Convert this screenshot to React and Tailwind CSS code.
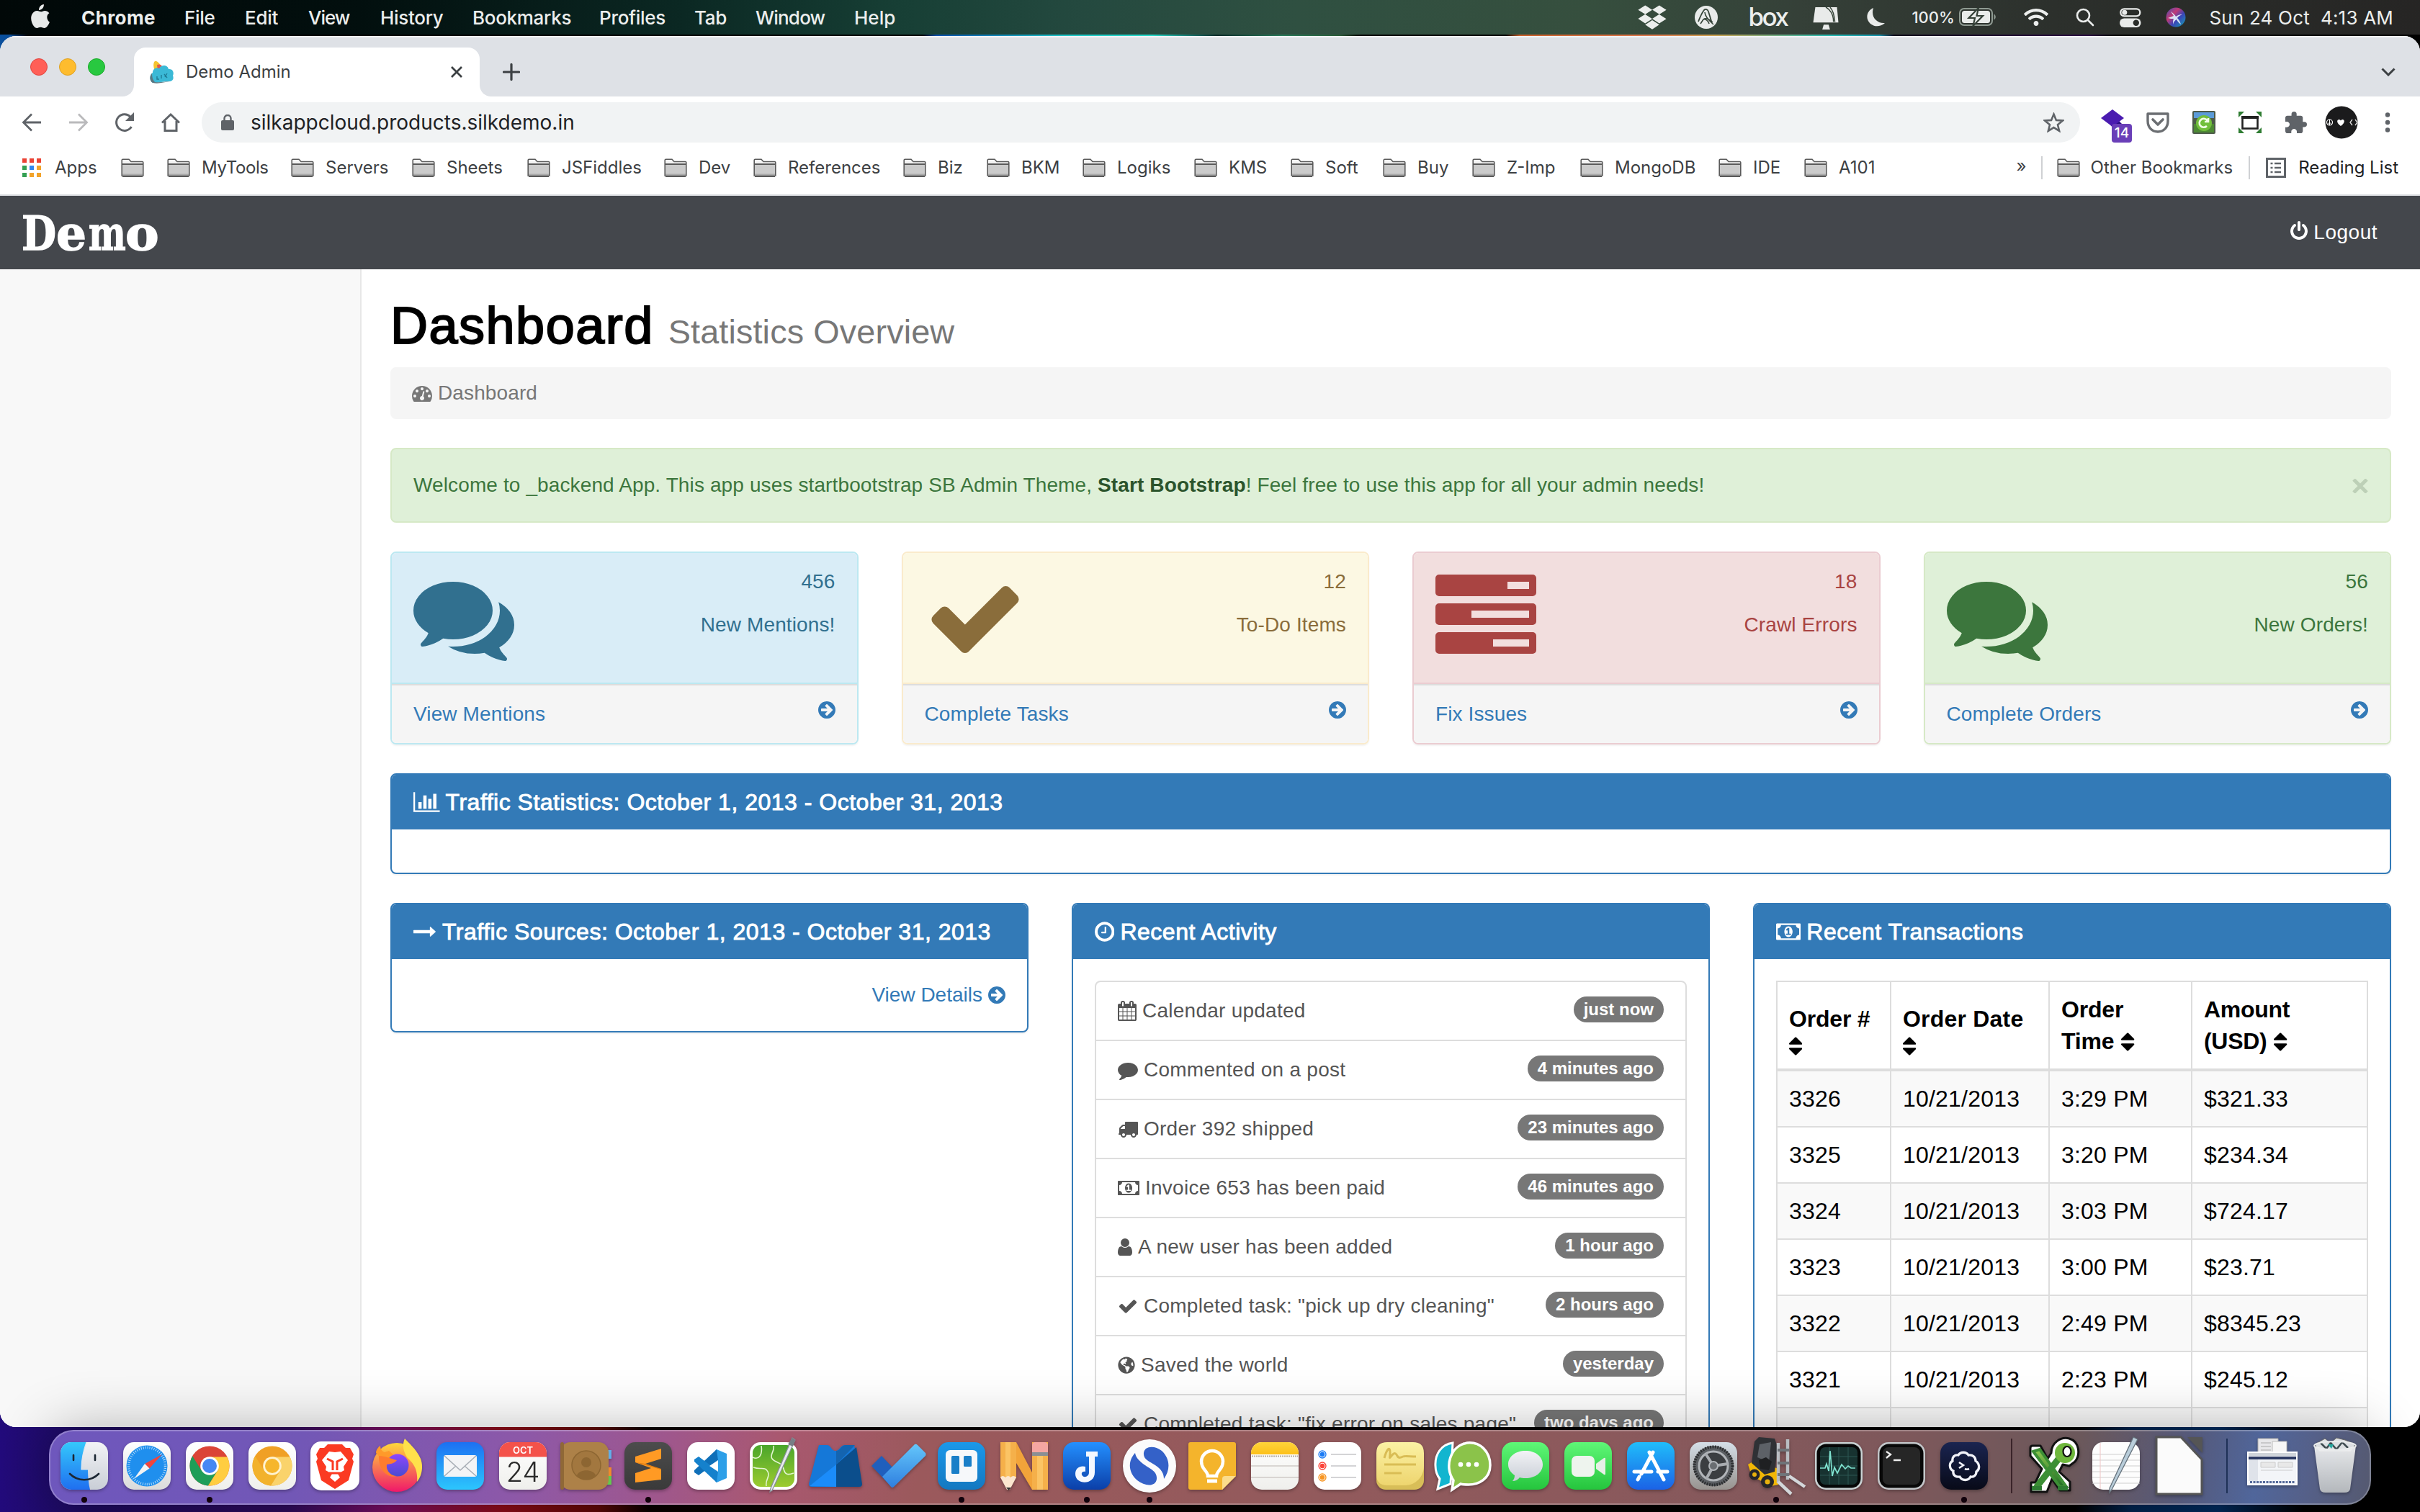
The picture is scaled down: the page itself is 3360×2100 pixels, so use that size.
import React from "react";
import { FaDropbox, FaWifi, FaGlobeAmericas } from "react-icons/fa";

/* ---------- Font Awesome 4 glyphs ---------- */

const GLYPHS = {
  comments: ["0 0 1792 1792", "M1408 768q0 139-94 257t-256.5 186.5-353.5 68.5q-86 0-176-16-124 88-278 128-36 9-86 16h-3q-11 0-20.5-8t-11.5-21q-1-3-1-6.5t.5-6.5 2-6l2.5-5 3.5-5.5 4-5 4.5-5 4-4.5q5-6 23-25t26-29.5 22.5-29 25-38.5 20.5-44q-124-72-195-177t-71-224q0-139 94-257t256.5-186.5 353.5-68.5 353.5 68.5 256.5 186.5 94 257zm384 256q0 120-71 224.5t-195 176.5q10 24 20.5 44t25 38.5 22.5 29 26 29.5 23 25q1 1 4 4.5t4.5 5 4 5 3.5 5.5l2.5 5 2 6 .5 6.5-1 6.5q-3 14-13 22t-22 7q-50-7-86-16-154-40-278-128-90 16-176 16-271 0-472-132 58 4 88 4 161 0 309-45t264-129q125-92 192-212t67-254q0-77-23-152 129 71 204 178t75 230z"],
  check: ["0 0 1792 1792", "M1671 566q0 40-28 68l-724 724-136 136q-28 28-68 28t-68-28l-136-136-362-362q-28-28-28-68t28-68l136-136q28-28 68-28t68 28l294 295 656-657q28-28 68-28t68 28l136 136q28 28 28 68z"],
  tasks: ["0 0 1792 1792", "M1024 1408h640v-128h-640v128zm-384-512h1024v-128h-1024v128zm640-512h384v-128h-384v128zm512 832v256q0 26-19 45t-45 19h-1664q-26 0-45-19t-19-45v-256q0-26 19-45t45-19h1664q26 0 45 19t19 45zm0-512v256q0 26-19 45t-45 19h-1664q-26 0-45-19t-19-45v-256q0-26 19-45t45-19h1664q26 0 45 19t19 45zm0-512v256q0 26-19 45t-45 19h-1664q-26 0-45-19t-19-45v-256q0-26 19-45t45-19h1664q26 0 45 19t19 45z"],
  arrowCircle: ["128 0 1536 1792", "M1413 896q0-27-18-45l-91-91-362-362q-18-18-45-18t-45 18l-91 91q-18 18-18 45t18 45l189 189h-502q-26 0-45 19t-19 45v128q0 26 19 45t45 19h502l-189 189q-19 19-19 45t19 45l91 91q18 18 45 18t45-18l362-362 91-91q18-18 18-45zm251 0q0 209-103 385.5t-279.5 279.5-385.5 103-385.5-103-279.5-279.5-103-385.5 103-385.5 279.5-279.5 385.5-103 385.5 103 279.5 279.5 103 385.5z"],
  dashboard: ["0 0 1792 1792", "M384 1152q0-53-37.5-90.5t-90.5-37.5-90.5 37.5-37.5 90.5 37.5 90.5 90.5 37.5 90.5-37.5 37.5-90.5zm192-448q0-53-37.5-90.5t-90.5-37.5-90.5 37.5-37.5 90.5 37.5 90.5 90.5 37.5 90.5-37.5 37.5-90.5zm428 481l101-382q6-26-7.5-48.5t-38.5-29.5-48 6.5-30 39.5l-101 382q-60 5-107 43.5t-63 98.5q-20 77 20 146t117 89 146-20 89-117q16-60-6-117t-72-91zm660-33q0-53-37.5-90.5t-90.5-37.5-90.5 37.5-37.5 90.5 37.5 90.5 90.5 37.5 90.5-37.5 37.5-90.5zm-640-640q0-53-37.5-90.5t-90.5-37.5-90.5 37.5-37.5 90.5 37.5 90.5 90.5 37.5 90.5-37.5 37.5-90.5zm448 192q0-53-37.5-90.5t-90.5-37.5-90.5 37.5-37.5 90.5 37.5 90.5 90.5 37.5 90.5-37.5 37.5-90.5zm320 448q0 261-141 483-19 29-54 29h-1402q-35 0-54-29-141-221-141-483 0-182 71-348t191-286 286-191 348-71 348 71 286 191 191 286 71 348z"],
  barChart: ["0 0 2048 1792", "M640 896v512h-256v-512h256zm384-512v1024h-256v-1024h256zm1024 1152v128h-2048v-1536h128v1408h1920zm-640-896v768h-256v-768h256zm384-384v1152h-256v-1152h256z"],
  longArrow: ["0 0 1792 1792", "M1728 893q0 14-10 24l-384 354q-16 14-35 6-19-9-19-29v-224h-1248q-14 0-23-9t-9-23v-192q0-14 9-23t23-9h1248v-224q0-21 19-29t35 5l384 350q10 10 10 23z"],
  clock: ["128 0 1536 1792", "M1024 544v448q0 14-9 23t-23 9h-320q-14 0-23-9t-9-23v-64q0-14 9-23t23-9h224v-352q0-14 9-23t23-9h64q14 0 23 9t9 23zm416 352q0-148-73-273t-198-198-273-73-273 73-198 198-73 273 73 273 198 198 273 73 273-73 198-198 73-273zm224 0q0 209-103 385.5t-279.5 279.5-385.5 103-385.5-103-279.5-279.5-103-385.5 103-385.5 279.5-279.5 385.5-103 385.5 103 279.5 279.5 103 385.5z"],
  calendar: ["64 0 1664 1792", "M192 1664h288v-288h-288v288zm352 0h320v-288h-320v288zm-352-352h288v-320h-288v320zm352 0h320v-320h-320v320zm-352-384h288v-288h-288v288zm736 736h320v-288h-320v288zm-384-736h320v-288h-320v288zm768 736h288v-288h-288v288zm-384-352h320v-320h-320v320zm-352-864v-288q0-13-9.5-22.5t-22.5-9.5h-64q-13 0-22.5 9.5t-9.5 22.5v288q0 13 9.5 22.5t22.5 9.5h64q13 0 22.5-9.5t9.5-22.5zm736 864h288v-320h-288v320zm-384-384h320v-288h-320v288zm384 0h288v-288h-288v288zm32-480v-288q0-13-9.5-22.5t-22.5-9.5h-64q-13 0-22.5 9.5t-9.5 22.5v288q0 13 9.5 22.5t22.5 9.5h64q13 0 22.5-9.5t9.5-22.5zm384-64v1280q0 52-38 90t-90 38h-1408q-52 0-90-38t-38-90v-1280q0-52 38-90t90-38h128v-96q0-66 47-113t113-47h64q66 0 113 47t47 113v96h384v-96q0-66 47-113t113-47h64q66 0 113 47t47 113v96h128q52 0 90 38t38 90z"],
  comment: ["0 0 1792 1792", "M1792 896q0 174-120 321.5t-326 233-450 85.5q-70 0-145-8-198 175-460 242-49 14-114 22-17 2-30.5-9t-17.5-29v-1q-3-4-.5-12t2-10 4.5-9.5l6-9 7-8.5 8-9q7-8 31-34.5t34.5-38 31-39.5 32.5-51 27-59 26-76q-157-89-247.5-220t-90.5-281q0-130 71-248.5t191-204.5 286-136.5 348-50.5q244 0 450 85.5t326 233 120 321.5z"],
  truck: ["0 0 1792 1792", "M640 1408q0-52-38-90t-90-38-90 38-38 90 38 90 90 38 90-38 38-90zm-384-512h384v-256h-158q-13 0-22 9l-195 195q-9 9-9 22v30zm1280 512q0-52-38-90t-90-38-90 38-38 90 38 90 90 38 90-38 38-90zm256-1088v1024q0 15-4 26.5t-13.5 18.5-16.5 11.5-23.5 6-22.5 2-25.5 0-22.5-.5q0 106-75 181t-181 75-181-75-75-181h-384q0 106-75 181t-181 75-181-75-75-181h-64q-3 0-22.5.5t-25.5 0-22.5-2-23.5-6-16.5-11.5-13.5-18.5-4-26.5q0-26 19-45t45-19v-320q0-8-.5-35t0-38 2.5-34.5 6.5-37 14-30.5 22.5-30l198-198q19-19 50.5-32t58.5-13h160v-192q0-26 19-45t45-19h1024q26 0 45 19t19 45z"],
  money: ["0 0 1920 1792", "M768 1152h384v-96h-128v-448h-114l-148 137 77 80q42-37 55-57h2v288h-128v96zm512-256q0 70-21 142t-59.5 134-101.5 101-138 39-138-39-101.5-101-59.5-134-21-142 21-142 59.5-134 101.5-101 138-39 138 39 101.5 101 59.5 134 21 142zm512 256v-512q-106 0-181-75t-75-181h-1152q0 106-75 181t-181 75v512q106 0 181 75t75 181h1152q0-106 75-181t181-75zm128-832v1152q0 26-19 45t-45 19h-1792q-26 0-45-19t-19-45v-1152q0-26 19-45t45-19h1792q26 0 45 19t19 45z"],
  user: ["256 0 1280 1792", "M1536 1399q0 109-62.5 187t-150.5 78h-854q-88 0-150.5-78t-62.5-187q0-85 8.5-160.5t31.5-152 58.5-131 94-89 134.5-34.5q131 128 313 128t313-128q76 0 134.5 34.5t94 89 58.5 131 31.5 152 8.5 160.5zm-256-887q0 159-112.5 271.5t-271.5 112.5-271.5-112.5-112.5-271.5 112.5-271.5 271.5-112.5 271.5 112.5 112.5 271.5z"],
  sort: ["384 0 1024 1792", "M1408 1088q0 26-19 45l-448 448q-19 19-45 19t-45-19l-448-448q-19-19-19-45t19-45 45-19h896q26 0 45 19t19 45zm0-384q0 26-19 45t-45 19h-896q-26 0-45-19t-19-45 19-45l448-448q19-19 45-19t45 19l448 448q19 19 19 45z"],
  power: ["128 0 1536 1792", "M1664 896q0 156-61 298t-164 245-245 164-298 61-298-61-245-164-164-245-61-298q0-182 80.5-343t226.5-270q43-32 95.5-25t83.5 50q32 42 24.5 94.5t-49.5 84.5q-98 74-151.5 181t-53.5 228q0 104 40.5 198.5t109.5 163.5 163.5 109.5 198.5 40.5 198.5-40.5 163.5-109.5 109.5-163.5 40.5-198.5q0-121-53.5-228t-151.5-181q-42-32-49.5-84.5t24.5-94.5q31-43 84-50t95 25q146 109 226.5 270t80.5 343zm-640-768v640q0 52-38 90t-90 38-90-38-38-90v-640q0-52 38-90t90-38 90 38 38 90z"],
};

function Fa({ name, className = "h-7" }) {
  const [viewBox, d] = GLYPHS[name];
  return (
    <svg viewBox={viewBox} className={`${className} w-auto shrink-0`} fill="currentColor">
      <path d={d} />
    </svg>
  );
}

/* ---------- macOS menu bar ---------- */

const MENUS = [
  ["File", "w-[84px]"],
  ["Edit", "w-[88px]"],
  ["View", "w-[100px] tracking-[-1px]"],
  ["History", "w-[128px]"],
  ["Bookmarks", "w-[176px]"],
  ["Profiles", "w-[132px]"],
  ["Tab", "w-[85px]"],
  ["Window", "w-[137px] tracking-[-0.8px]"],
  ["Help", "tracking-normal"],
];

function MenuBar() {
  return (
    <div className="flex h-12 shrink-0 items-center whitespace-pre bg-[linear-gradient(90deg,#010808_0px,#020f0e_500px,#0b2823_950px,#173f35_1250px,#24493f_1500px,#2f5041_1800px,#364f3e_2200px,#354038_2500px,#2c302c_2850px,#262524_3360px)] text-[26px] font-medium tracking-[-0.3px] text-[#eceeed]">
      <svg viewBox="0 0 28 34" className="ml-[42px] h-[33px] w-7 -translate-y-0.5" fill="#e8eaea">
        <path d="M19 0c.3 2.400-.7 4.500-2 6-1.300 1.400-3.200 2.500-5 2.300C11.700 6.200 12.800 4 14 2.700 15.300 1.200 17.400.1 19 0z" />
        <path d="M23.600 18c0-3 2-4.700 3.200-5.500C25 10 22.500 9.300 20.800 9.200c-2.300-.2-4.500 1.400-5.900 1.400S11.500 9.300 9.400 9.300C6.500 9.400 3.700 11.200 2.300 13.900-.8 19 1.400 27 4.400 31c1.400 2 3.100 3 4.700 3 2.100-.1 2.900-1.300 5.400-1.300s3.200 1.300 5.400 1.300c2.300 0 3.700-2 5.100-4 1.600-2.300 2.300-4.600 2.300-4.700-.1 0-3.700-2-3.700-7.300z" />
      </svg>
      <span className="ml-[43px] w-[143px] font-bold tracking-[0.4px]">Chrome</span>
      {MENUS.map(([label, cls]) => (
        <span key={label} className={cls}>{label}</span>
      ))}
      <div className="ml-auto flex items-center">
        <span className="w-[79px]"><FaDropbox className="h-[38px] w-[40px]" /></span>
        <span className="w-[74px]">
          <svg viewBox="0 0 32 32" className="size-8">
            <circle cx="16" cy="16" r="16" fill="#e9ebea" />
            <path d="M5 22c3-8 5-12 8-16 2-2 5-1 6 2l4 13" fill="none" stroke="#37453a" strokeWidth="1.800" />
            <path d="M14 9c0 4 4 10 12 17M8 25l4-6M12 19c3-1 7 2 8 6M12 19c3-3 9 0 13 4" fill="none" stroke="#37453a" strokeWidth="1.600" />
          </svg>
        </span>
        <span className="w-[90px] -translate-y-px text-[35px] leading-none tracking-[-2.500px]">box</span>
        <span className="w-[75px]">
          <svg viewBox="0 0 36 34" className="h-[33px] w-9 translate-y-px" fill="#e9ebea">
            <path d="M3 1h31l2 22H0z" /><path d="M18 1c5 3 11 8 11 21M24 1c3 3 6 10 7 21" fill="none" stroke="#37453a" strokeWidth="1.500" />
            <path d="M13 33l2-7h7l2 7z" />
          </svg>
        </span>
        <span className="w-[62px]">
          <svg viewBox="0 0 26 26" className="size-[26px]" fill="#e9ebea"><path d="M9 0C2 3-1 10 1 16c3 9 15 13 24 5C14 22 5 13 9 0z" /></svg>
        </span>
        <span className="w-[66px] text-[22px] tracking-normal">100%</span>
        <span className="w-[90px]">
          <svg viewBox="0 0 52 26" className="h-[26px] w-[52px]">
            <rect x="1" y="1" width="45" height="23" rx="6" fill="none" stroke="#8f9a92" strokeWidth="2" />
            <rect x="4" y="4" width="39" height="17" rx="3.500" fill="#e9ebea" />
            <path d="M48.500 8.500c3 1.500 3 6.500 0 8z" fill="#8f9a92" />
            <path d="M27 0L13.500 14H22l-2.500 11L33 11h-8.500z" fill="#e9ebea" stroke="#344037" strokeWidth="2.200" />
          </svg>
        </span>
        <span className="w-[72px]"><FaWifi className="h-[28px] w-[34px]" /></span>
        <span className="w-[61px]">
          <svg viewBox="0 0 26 26" className="size-[26px]" fill="none" stroke="#e9ebea" strokeWidth="2.600" strokeLinecap="round"><circle cx="10.500" cy="10.500" r="8.500" /><path d="M17 17l7 7" /></svg>
        </span>
        <span className="w-16">
          <svg viewBox="0 0 30 27" className="h-[27px] w-[30px]">
            <rect x="1.300" y="1.300" width="27" height="10" rx="5" fill="none" stroke="#e9ebea" strokeWidth="2.300" />
            <circle cx="6.800" cy="6.300" r="3.500" fill="#e9ebea" />
            <rect x="0" y="14.500" width="29.500" height="12.500" rx="6.200" fill="#e9ebea" />
            <circle cx="22.800" cy="20.700" r="4.200" fill="#2a2d2a" />
          </svg>
        </span>
        <span className="w-[60px]">
          <svg viewBox="0 0 28 28" className="size-7">
            <defs>
              <linearGradient id="siri" x1="0" y1="0" x2="1" y2="1"><stop offset="0" stopColor="#3a4fb6" /><stop offset=".35" stopColor="#c23a76" /><stop offset=".6" stopColor="#3a45b8" /><stop offset="1" stopColor="#10a6b0" /></linearGradient>
            </defs>
            <circle cx="14" cy="14" r="13.500" fill="url(#siri)" />
            <path d="M7 6c4 3 6 5 7 7 3-2 5-3 9-3-4 2-6 3-7 5 2 2 4 5 5 9-3-2-5-5-6-7-2 1-4 3-5 7 0-4 0-6 1-8-3 0-5 0-8-1 3-1 6-2 8-3-1-2-3-4-4-6z" fill="#e6f4ff" opacity=".9" />
          </svg>
        </span>
        <span className="mr-[37px] font-normal tracking-[0.2px]">{"Sun 24 Oct  4:13 AM"}</span>
      </div>
    </div>
  );
}

/* ---------- Chrome window ---------- */

function TabStrip() {
  return (
    <div className="flex h-[84px] shrink-0 items-end border-t-2 border-[#f1f2f4] bg-[#dee1e6]">
      <div className="mb-[29px] ml-[42px] flex gap-4">
        <span className="size-6 rounded-full border border-[#e0443e] bg-[#ff5f57]" />
        <span className="size-6 rounded-full border border-[#dea123] bg-[#febc2e]" />
        <span className="size-6 rounded-full border border-[#1aab29] bg-[#28c840]" />
      </div>
      <div className="relative ml-10 flex h-[68px] w-[480px] items-center rounded-t-2xl bg-white">
        <svg viewBox="0 0 16 16" className="absolute -left-4 bottom-0 size-4" fill="#fff"><path d="M16 0v16H0C9 16 16 9 16 0z" /></svg>
        <svg viewBox="0 0 16 16" className="absolute -right-4 bottom-0 size-4" fill="#fff"><path d="M0 0v16h16C7 16 0 9 0 0z" /></svg>
        <svg viewBox="0 0 34 32" className="ml-[22px] h-8 w-[34px]">
          <path d="M6 12C4 4 6 0 9 1s7 6 8 10z" fill="#f4c430" />
          <path d="M10 6c5-2 8 2 9 6l-8 2z" fill="#e2574c" />
          <path d="M4 31c-5-3-5-11 0-14 0-5 5-8 9-6 3-6 12-5 13 1 6-1 8 5 6 9 2 5-1 8-5 8-8 0-15 2-23 2z" fill="#3bb9d6" />
          <path d="M4 31c-5-3-4-10-1-13 0 5 1 9 4 12 7 1 15-1 21-1-8 1-16 4-24 2z" fill="#5b7680" />
          <path d="M10 22v4h3M16 20v5M20 19l4 5M24 18l-3 5" stroke="#1f7c96" strokeWidth="1.400" fill="none" />
        </svg>
        <span className="ml-4 text-[24px] text-[#3c4043]">Demo Admin</span>
        <svg viewBox="0 0 16 16" className="ml-auto mr-6 size-4" stroke="#3c4043" strokeWidth="2.800"><path d="M1 1l14 14M15 1L1 15" /></svg>
      </div>
      <svg viewBox="0 0 24 24" className="mb-[22px] ml-8 size-6" stroke="#3c4043" strokeWidth="3.200" strokeLinecap="round"><path d="M12 1.500v21M1.500 12h21" /></svg>
      <svg viewBox="0 0 20 12" className="mb-7 ml-auto mr-[34px] h-3 w-5" fill="none" stroke="#3c4043" strokeWidth="3"><path d="M1.500 1.500L10 10l8.500-8.500" /></svg>
    </div>
  );
}

function Toolbar() {
  return (
    <div className="flex h-[72px] shrink-0 items-center bg-white">
      <svg viewBox="0 0 28 26" className="ml-[30px] h-[26px] w-7" fill="none" stroke="#5f6368" strokeWidth="2.800"><path d="M27 13H3M14 1.500L2.500 13 14 24.500" /></svg>
      <svg viewBox="0 0 28 26" className="ml-[37px] h-[26px] w-7" fill="none" stroke="#bababc" strokeWidth="2.800"><path d="M1 13h24M14 1.500L25.500 13 14 24.500" /></svg>
      <svg viewBox="0 0 28 28" className="ml-[36px] size-7"><path d="M23.500 20A11.300 11.300 0 1 1 22 6.200" fill="none" stroke="#5f6368" strokeWidth="3" /><path d="M27 0v12H15z" fill="#5f6368" /></svg>
      <svg viewBox="0 0 28 28" className="ml-9 size-7" fill="none" stroke="#5f6368" strokeWidth="3"><path d="M2 14.500L14 3l12 11.500M6 12v13.500h16V12" /></svg>
      <div className="ml-[29px] flex h-14 w-[2608px] items-center rounded-full bg-[#f1f3f4]">
        <svg viewBox="0 0 18 22" className="ml-[27px] h-[22px] w-[18px]"><rect x="0" y="8" width="18" height="14" rx="2" fill="#5f6368" /><path d="M4.500 9V5.500a4.500 4.500 0 0 1 9 0V9" fill="none" stroke="#5f6368" strokeWidth="2.400" /></svg>
        <span className="ml-[23px] text-[28px] text-[#202124]">silkappcloud.products.silkdemo.in</span>
        <svg viewBox="0 0 28 27" className="ml-auto mr-[22px] h-[28px] w-[29px]" fill="none" stroke="#5f6368" strokeWidth="2.500"><path d="M14 2.500l3.300 8 8.600.6-6.600 5.500 2.100 8.400L14 20.400 6.600 25l2.100-8.400L2.100 11.100l8.600-.6z" /></svg>
      </div>
      <div className="relative ml-7 h-10 w-11">
        <svg viewBox="0 0 34 36" className="h-9 w-[34px]"><path d="M8 16l10-6 14 14-10 9z" fill="#2a0d80" /><path d="M17 2l16 12-16 12L1 14z" fill="#4a1bb0" /></svg>
        <span className="absolute -bottom-2 left-4 flex h-[26px] w-7 items-center justify-center rounded bg-[#6a3fb8] text-[19px] font-medium text-white">14</span>
      </div>
      <svg viewBox="0 0 32 30" className="ml-5 h-[30px] w-8" fill="none" stroke="#6b6e72" strokeLinejoin="round"><path d="M2 3h28v10c0 9-6 15-14 15S2 22 2 13z" strokeWidth="3.400" /><path d="M9 11l7 7 7-7" strokeWidth="3.600" strokeLinecap="round" /></svg>
      <svg viewBox="0 0 32 32" className="ml-8 size-8">
        <rect width="32" height="32" rx="2" fill="#4d5a4a" /><rect x="2" y="2" width="28" height="8" fill="#5b9bd8" /><rect x="2" y="18" width="28" height="12" fill="#4d8a34" />
        <circle cx="16" cy="17" r="11" fill="#72bf3c" /><path d="M20 21a6 6 0 1 1 1-7M22 10v5h-5" fill="none" stroke="#f2ffe8" strokeWidth="2.600" />
      </svg>
      <svg viewBox="0 0 32 30" className="ml-8 h-[30px] w-8">
        <path d="M0 0h8L0 8zM32 0v8l-8-8zM0 30v-8l8 8zM32 30h-8l8-8z" fill="#2f7d32" />
        <rect x="5.500" y="7.500" width="21" height="16" fill="none" stroke="#222" strokeWidth="2.600" /><rect x="4" y="6" width="24" height="4" fill="#222" />
      </svg>
      <svg viewBox="2 1 21 21" className="ml-[33px] size-[30px]" fill="#5f6368"><path d="M20.500 11H19V7c0-1.100-.9-2-2-2h-4V3.500a2.500 2.500 0 0 0-5 0V5H4c-1.100 0-2 .9-2 2v3.800h1.500c1.490 0 2.700 1.210 2.700 2.700s-1.210 2.700-2.700 2.700H2V20c0 1.100.9 2 2 2h3.800v-1.500c0-1.490 1.210-2.700 2.700-2.700s2.700 1.210 2.700 2.700V22H17c1.100 0 2-.9 2-2v-4h1.500a2.500 2.500 0 0 0 0-5z" /></svg>
      <svg viewBox="0 0 46 46" className="ml-[25px] size-[46px]">
        <circle cx="23" cy="23" r="22.500" fill="#1b1b1c" />
        <circle cx="6.500" cy="23" r="4" fill="none" stroke="#fff" strokeWidth="1.200" /><path d="M6.500 19v8M6.500 23l-3 3M6.500 23l3 3" stroke="#fff" />
        <path d="M22 28c-7-5-5-9-2.500-9 1.500 0 2.500 1.500 2.500 1.500S23 19 24.500 19c2.500 0 4.500 4-2.500 9z" fill="#fff" />
        <path d="M38 19l-3 4 3 4M42 19l3 4-3 4" fill="none" stroke="#ddd" strokeWidth="1.400" />
      </svg>
      <svg viewBox="0 0 8 28" className="ml-[37px] h-7 w-2" fill="#5f6368"><circle cx="4" cy="3.500" r="3.200" /><circle cx="4" cy="14" r="3.200" /><circle cx="4" cy="24.500" r="3.200" /></svg>
    </div>
  );
}

function Folder() {
  return (
    <svg viewBox="0 0 32 26" className="h-[26px] w-8 shrink-0">
      <path d="M1.200 24V2.500q0-1.300 1.300-1.300H11l3 3.300h15.500q1.300 0 1.300 1.300V24z" fill="#f4f4f4" stroke="#5a5a5a" strokeWidth="1.600" />
      <rect x="2" y="9" width="28" height="14" fill="#cbcbcb" />
      <path d="M1 8h30M2 25h28" stroke="#5a5a5a" strokeWidth="2" />
      <path d="M2 22.500h28" stroke="#a9a9a9" strokeWidth="2" />
    </svg>
  );
}

const BOOKMARKS = [
  ["", "w-16"],
  ["MyTools", "w-[172px] tracking-[-0.4px]"],
  ["Servers", "w-[168px]"],
  ["Sheets", "w-40"],
  ["JSFiddles", "w-[190px]"],
  ["Dev", "w-[124px]"],
  ["References", "w-[208px]"],
  ["Biz", "w-[116px]"],
  ["BKM", "w-[133px]"],
  ["Logiks", "w-[155px]"],
  ["KMS", "w-[134px]"],
  ["Soft", "w-32"],
  ["Buy", "w-[124px]"],
  ["Z-Imp", "w-[150px]"],
  ["MongoDB", "w-48"],
  ["IDE", "w-[119px]"],
  ["A101", "w-[120px]"],
];

function BookmarksBar() {
  return (
    <div className="flex h-[66px] shrink-0 items-center border-b-2 border-[#dadce0] bg-white pb-2.5 text-[24px] text-[#3c4043]">
      <svg viewBox="0 0 26 26" className="ml-[31px] size-[26px]">
        <path d="M0 0h6v6H0zM10 0h6v6h-6zM20 0h6v6h-6z" fill="#ea4335" />
        <path d="M0 10h6v6H0zM0 20h6v6H0z" fill="#34a053" /><path d="M10 10h6v6h-6z" fill="#2f86f0" />
        <path d="M20 10h6v6h-6zM10 20h6v6h-6zM20 20h6v6h-6z" fill="#f2a32a" />
      </svg>
      <span className="ml-[19px] w-[92px]">Apps</span>
      {BOOKMARKS.map(([label, cls], i) => (
        <span key={i} className={`flex items-center gap-4 ${cls}`}><Folder />{label}</span>
      ))}
      <span className="ml-auto -translate-y-0.5 text-[24px]">»</span>
      <span className="ml-5 h-8 w-0.5 bg-[#cfd1d4]" />
      <span className="ml-5 flex items-center gap-[15px]"><Folder />Other Bookmarks</span>
      <span className="ml-[22px] h-8 w-0.5 bg-[#cfd1d4]" />
      <svg viewBox="0 0 28 28" className="ml-[22px] size-7" stroke="#5f6368"><rect x="1.500" y="1.500" width="25" height="25" fill="none" strokeWidth="3" /><path d="M6.500 8h3M12 8h9M6.500 14h3M12 14h9M6.500 20h3M12 20h9" strokeWidth="2.600" /></svg>
      <span className="ml-[17px] mr-[30px] text-[#202124]">Reading List</span>
    </div>
  );
}

/* ---------- Admin page ---------- */

const STATS = [
  { icon: "comments", n: "456", label: "New Mentions!", link: "View Mentions", box: "border-[#bce8f1]", head: "bg-[#d9edf7] text-[#31708f] border-[#bce8f1]" },
  { icon: "check", n: "12", label: "To-Do Items", link: "Complete Tasks", box: "border-[#faebcc]", head: "bg-[#fcf8e3] text-[#8a6d3b] border-[#faebcc]" },
  { icon: "tasks", n: "18", label: "Crawl Errors", link: "Fix Issues", box: "border-[#ebccd1]", head: "bg-[#f2dede] text-[#a94442] border-[#ebccd1]" },
  { icon: "comments", n: "56", label: "New Orders!", link: "Complete Orders", box: "border-[#d6e9c6]", head: "bg-[#dff0d8] text-[#3c763d] border-[#d6e9c6]" },
];

function StatPanel({ s }) {
  return (
    <div className={`overflow-hidden rounded-lg border-2 shadow-[0_2px_2px_rgba(0,0,0,0.05)] ${s.box}`}>
      <div className={`flex h-[182px] justify-between border-b-2 px-[30px] py-5 ${s.head}`}>
        <Fa name={s.icon} className="h-[140px]" />
        <div className="flex flex-col gap-5 text-right">
          <div>{s.n}</div>
          <div>{s.label}</div>
        </div>
      </div>
      <div className="flex h-[82px] items-start justify-between border-t-2 border-[#ddd] bg-[#f5f5f5] px-[30px] pt-5 text-[#337ab7]">
        <span>{s.link}</span>
        <Fa name="arrowCircle" />
      </div>
    </div>
  );
}

function Panel({ icon, title, children, className = "" }) {
  return (
    <div className={`overflow-hidden rounded-lg border-2 border-[#337ab7] bg-white shadow-[0_2px_2px_rgba(0,0,0,0.05)] ${className}`}>
      <div className="flex h-[76px] items-center gap-2 bg-[#337ab7] px-[30px] text-[32px] tracking-[0.5px] text-white [-webkit-text-stroke:0.9px_white]">
        <Fa name={icon} className="h-8" />
        {title}
      </div>
      {children}
    </div>
  );
}

const ACTIVITY = [
  ["calendar", "Calendar updated", "just now"],
  ["comment", "Commented on a post", "4 minutes ago"],
  ["truck", "Order 392 shipped", "23 minutes ago"],
  ["money", "Invoice 653 has been paid", "46 minutes ago"],
  ["user", "A new user has been added", "1 hour ago"],
  ["check", 'Completed task: "pick up dry cleaning"', "2 hours ago"],
  ["globe", "Saved the world", "yesterday"],
  ["check", 'Completed task: "fix error on sales page"', "two days ago"],
];

const ORDERS = [
  ["3326", "10/21/2013", "3:29 PM", "$321.33"],
  ["3325", "10/21/2013", "3:20 PM", "$234.34"],
  ["3324", "10/21/2013", "3:03 PM", "$724.17"],
  ["3323", "10/21/2013", "3:00 PM", "$23.71"],
  ["3322", "10/21/2013", "2:49 PM", "$8345.23"],
  ["3321", "10/21/2013", "2:23 PM", "$245.12"],
  ["3320", "10/21/2013", "2:15 PM", "$5663.54"],
];

const COLS = "grid grid-cols-[158px_220px_198px_1fr]";

function Transactions() {
  return (
    <div className="mx-[30px] mt-[30px] border-2 border-[#ddd] text-[32px] leading-[44px] text-black">
      <div className={`${COLS} h-[124px] divide-x-2 divide-[#ddd] border-b-4 border-[#ddd] font-bold`}>
        <div className="px-4 pt-[29px] tracking-[-0.2px]">Order #<Fa name="sort" className="h-8" /></div>
        <div className="px-4 pt-[29px] tracking-[0.2px]">Order Date<Fa name="sort" className="h-8" /></div>
        <div className="px-4 pt-4 tracking-[-0.2px]">Order<div className="flex items-center gap-2.5">Time<Fa name="sort" className="h-8 translate-y-px" /></div></div>
        <div className="px-4 pt-4 tracking-[-0.3px]">Amount<div className="flex items-center gap-2.5">(USD)<Fa name="sort" className="h-8 translate-y-px" /></div></div>
      </div>
      {ORDERS.map((row, i) => (
        <div key={i} className={`${COLS} h-[78px] divide-x-2 divide-[#ddd] border-b-2 border-[#ddd] ${i % 2 ? "bg-white" : "bg-[#f9f9f9]"}`}>
          {row.map((cell, j) => (
            <div key={j} className="px-4 pt-4 tracking-[0.2px]">{cell}</div>
          ))}
        </div>
      ))}
    </div>
  );
}

function AdminPage() {
  return (
    <div className="flex grow flex-col bg-white font-['Liberation_Sans',sans-serif] text-[28px] leading-[40px] tracking-[0.12px]">
      <header className="flex h-[102px] shrink-0 items-center justify-between bg-[#44474c] text-white">
        <div className="ml-[30px] flex translate-y-px font-['DejaVu_Serif',serif] text-[66px] font-bold leading-none tracking-normal [-webkit-text-stroke:1.5px_white]">
          <span className="w-12 origin-left scale-x-[0.84]">D</span>
          <span className="w-[45px]">e</span>
          <span className="w-[51px] origin-left scale-x-[0.74]">m</span>
          <span className="origin-left scale-x-[1.06]">o</span>
        </div>
        <div className="mr-[59px] flex items-center gap-2 tracking-[0.5px]"><Fa name="power" className="h-7 -translate-y-0.5" />Logout</div>
      </header>
      <div className="flex grow">
        <aside className="w-[502px] shrink-0 border-r-2 border-[#e7e7e7] bg-[#f8f8f8]" />
        <main className="flex grow flex-col px-10">
          <h1 className="flex h-[136px] items-baseline gap-5 pt-[38px] text-[72px] leading-[80px] text-black">
            <span className="tracking-[1.500px] [-webkit-text-stroke:2px_black]">Dashboard</span>
            <span className="text-[46.800px] text-[#777]">Statistics Overview</span>
          </h1>
          <div className="flex h-[72px] items-center gap-2 rounded-lg bg-[#f5f5f5] px-[30px] text-[#777]"><Fa name="dashboard" className="h-7" />Dashboard</div>
          <div className="mt-10 flex h-[104px] items-center justify-between rounded-lg border-2 border-[#d6e9c6] bg-[#dff0d8] px-[30px] text-[#3c763d]">
            <p>Welcome to _backend App. This app uses startbootstrap SB Admin Theme, <b className="text-[#2b542c]">Start Bootstrap</b>! Feel free to use this app for all your admin needs!</p>
            <svg viewBox="0 0 22 20" className="mt-px h-5 w-[22px]" stroke="#bdd0b7" strokeWidth="5"><path d="M2 1l18 18M20 1L2 19" /></svg>
          </div>
          <div className="mt-10 grid grid-cols-4 gap-[60px]">
            {STATS.map((s) => <StatPanel key={s.label} s={s} />)}
          </div>
          <Panel icon="barChart" title="Traffic Statistics: October 1, 2013 - October 31, 2013" className="mt-10 h-[140px]" />
          <div className="mt-10 grid grid-cols-3 items-start gap-[60px]">
            <Panel icon="longArrow" title="Traffic Sources: October 1, 2013 - October 31, 2013" className="h-[180px]">
              <div className="flex items-center justify-end gap-2 px-[30px] pt-[30px] tracking-normal text-[#337ab7]">View Details <Fa name="arrowCircle" /></div>
            </Panel>
            <Panel icon="clock" title="Recent Activity" className="h-[800px]">
              <div className="mx-[30px] mt-[30px] divide-y-2 divide-[#ddd] overflow-hidden rounded-lg border-2 border-[#ddd] text-[#555]">
                {ACTIVITY.map(([icon, text, when]) => (
                  <div key={text} className="flex h-[82px] items-start justify-between px-[30px] pt-5">
                    <span className="flex items-center gap-2 tracking-[0.25px]">
                      {icon === "globe" ? <FaGlobeAmericas className="size-6" /> : <Fa name={icon} />}{text}
                    </span>
                    <span className="flex h-9 items-center rounded-[20px] bg-[#777] px-3.5 text-[24px] font-bold leading-none tracking-normal text-white">{when}</span>
                  </div>
                ))}
              </div>
            </Panel>
            <Panel icon="money" title="Recent Transactions" className="h-[800px]">
              <Transactions />
            </Panel>
          </div>
        </main>
      </div>
    </div>
  );
}

/* ---------- Dock ---------- */

const Tile = ({ fill = "#fff", children }) => (
  <>
    <rect x="7" y="7" width="66" height="66" rx="15" fill={fill} />
    {children}
  </>
);

const Gradients = () => (
  <svg className="absolute size-0">
    <defs>
      {[
        ["blueV", "#1d70f2", "#2cc6fd"], ["finderL", "#35c8fb", "#1f6ff0"], ["grayV", "#f2f3f6", "#c9ced6"], ["whiteV", "#ffffff", "#dadada"],
        ["greenV", "#5ff777", "#25c53d"], ["storeV", "#20bdfa", "#1b62e6"], ["jopV", "#2490ff", "#0b3fa8"], ["trelloV", "#1b98ea", "#1478c0"],
        ["darkV", "#4c4c4c", "#3a3a3a"], ["prefV", "#d5dfe8", "#97938f"], ["calV", "#ffffff", "#efefec"], ["mapV", "#49a52b", "#9ccb2f"],
        ["stickV", "#fbf2a4", "#eed56f"], ["fireV", "#ffd83a", "#f0186a"], ["termV", "#1a2450", "#080a18"], ["notesV", "#ffd43a", "#fcc01a"],
        ["todoV", "#64c6fa", "#2f7fe0"], ["xV", "#8fcb4f", "#1f6b25"], ["trashV", "#f2f3f4", "#bcbfc2"], ["purp", "#8f46ff", "#4a4bd0"],
      ].map(([id, a, b]) => (
        <linearGradient key={id} id={id} x1="0" y1="0" x2="0" y2="1"><stop offset="0" stopColor={a} /><stop offset="1" stopColor={b} /></linearGradient>
      ))}
      <clipPath id="tile"><rect x="7" y="7" width="66" height="66" rx="15" /></clipPath>
    </defs>
  </svg>
);

const ChromeMark = ({ c }) => (
  <>
    <circle cx="40" cy="40" r="27.500" fill={c[0]} />
    <path d="M16.200 26.200A27.500 27.500 0 0 0 38 67.400L51.500 46 28.500 46z" fill={c[1]} />
    <path d="M40 27.500h24.500A27.500 27.500 0 0 1 38 67.400L52 45z" fill={c[2]} />
    <circle cx="40" cy="40" r="12.800" fill={c[4]} />
    <circle cx="40" cy="40" r="10" fill={c[3]} />
  </>
);

const APPS = [
  { name: "Finder", run: true, art: (
    <g><g clipPath="url(#tile)"><rect x="7" y="7" width="66" height="66" fill="url(#grayV)" /><path d="M7 7h36c-4 11-7 24-7 38h9c0 10 1 20 3 28H7z" fill="url(#finderL)" /></g>
      <path d="M25 25v7M55 25v7M20 51c11 11 29 11 40 0" fill="none" stroke="#1c2733" strokeWidth="2.600" strokeLinecap="round" /><path d="M43 7c-4 11-7 24-7 38h9" fill="none" stroke="#dfe6ee" strokeWidth="1.200" /></g>) },
  { name: "Safari", art: (
    <Tile fill="url(#whiteV)"><circle cx="40" cy="40" r="28.500" fill="#1f8fee" /><circle cx="40" cy="40" r="25.500" fill="none" stroke="#b5dcf9" strokeWidth="3.500" strokeDasharray="1 2" />
      <path d="M61 24L43.500 43.500 37 37z" fill="#f0443c" /><path d="M22 58l15-21 6.500 6.500z" fill="#f3f3f3" /></Tile>) },
  { name: "Chrome", run: true, art: <Tile fill="url(#calV)"><ChromeMark c={["#db4437", "#1e9e58", "#ffcd40", "#4687f4", "#fff"]} /></Tile> },
  { name: "Canary", art: <Tile fill="url(#calV)"><ChromeMark c={["#f0a025", "#f2b22c", "#fad36b", "#f6b62c", "#fff3d0"]} /></Tile> },
  { name: "Brave", art: (
    <g><rect x="6" y="6" width="68" height="68" rx="15" fill="#fff" /><path d="M30 10h20l5 5h6l5 9-2 6 2 4-7 26-19 12-19-12-7-26 2-4-2-6 5-9h6z" fill="#fb3a22" />
      <path d="M40 21l8-1 10 12-6 9 1 5-9 5 3 5-7 6-7-6 3-5-9-5 1-5-6-9 10-12z" fill="#fff" /><path d="M29 30l8 4v12M51 30l-8 4v12M32 50h16" fill="none" stroke="#fb3a22" strokeWidth="3" /></g>) },
  { name: "Firefox", art: (
    <g><circle cx="39" cy="42" r="34" fill="url(#fireV)" /><path d="M50 2c4 5 16 14 22 28 4 10 2 24-5 32 2-20-8-28-14-34-5-8-7-17-3-26z" fill="#ffe14a" />
      <path d="M10 22c0-4 3-8 6-10 0 5 3 8 6 9l6-2c5 4 10 9 10 12-6 2-8 5-14 6z" fill="#ff9a2a" /><circle cx="40" cy="39" r="15.500" fill="url(#purp)" /><path d="M14 26c8 0 17 4 25 6-4 5-8 5-14 6-2 8 5 16 14 16-12 4-26-8-25-28z" fill="#ff7c2e" /></g>) },
  { name: "Mail", art: (
    <Tile fill="url(#blueV)"><rect x="17" y="25" width="46" height="30" rx="3" fill="#f3f4f6" /><path d="M18 26l22 20 22-20M18 54l16-14M62 54L46 40" fill="none" stroke="#a7adb5" strokeWidth="1.500" /></Tile>) },
  { name: "Calendar", art: (
    <g><Tile fill="url(#calV)" /><g clipPath="url(#tile)"><rect x="7" y="7" width="66" height="20.500" fill="#f4524a" /></g>
      <text x="40" y="22.500" textAnchor="middle" fontSize="13" fontWeight="600" fill="#fff" fontFamily="Inter">OCT</text>
      <text x="40" y="62" textAnchor="middle" fontSize="38" fontWeight="300" fill="#2a2a2a" fontFamily="Inter">24</text></g>) },
  { name: "Contacts", art: (
    <g><path d="M68 18h8v12h-8z" fill="#62aee8" /><path d="M68 42h8v12h-8z" fill="#f08a2c" /><path d="M68 54h8v12h-8z" fill="#63c94d" /><rect x="5" y="7" width="67" height="66" rx="14" fill="#ad8148" /><rect x="5" y="7" width="5" height="66" rx="3" fill="#8f6837" />
      <circle cx="41" cy="39" r="20" fill="#a2773f" stroke="#8d6632" strokeWidth="1.500" /><circle cx="41" cy="35" r="7" fill="#8d6632" /><path d="M28 53c3-9 23-9 26 0-6 8-20 8-26 0z" fill="#8d6632" /></g>) },
  { name: "Sublime", run: true, art: (
    <Tile fill="url(#darkV)"><path d="M22 27l36-11v14L36 37l22 8v14L22 63V50l22-7-22-8z" fill="#ff9a24" /><path d="M22 35l36 10v-1L36 37z" fill="#e07c10" /></Tile>) },
  { name: "VSCode", art: (
    <Tile><path d="M48 17l14 6v34l-14 6-2-2V19z" fill="#2d9fe8" /><path d="M48 17l2 16-27 20-6-4v-3z" fill="#0f6fb8" /><path d="M48 63l2-16-27-20-6 4v3z" fill="#1581cc" /><path d="M50 32v16L38 40z" fill="#fff" /></Tile>) },
  { name: "CotEditor", art: (
    <g><rect x="7" y="7" width="66" height="66" rx="15" fill="#fff" /><rect x="11" y="11" width="58" height="58" rx="11" fill="url(#mapV)" />
      <path d="M11 28c8 4 14-2 12-16M30 68c-2-10 6-12 2-20s-10-2-20-6M40 12c2 8-6 12-2 18s14 4 16 14 8 8 14 6" fill="none" stroke="#e3f6d2" strokeWidth="1.600" /><path d="M66 1l4 3-32 70-3 2 1-5z" fill="#e9ebee" stroke="#87909a" strokeWidth="1.200" /><path d="M60 10l6-9 4 3-3 9z" fill="#777e86" /></g>) },
  { name: "Kite", art: (
    <g><path d="M16 11h11c6 0 6 8 12 8s6-8 14-8h12l10 54q0 4-3 4H6q-4 0-4-4z" fill="#1578d8" /><path d="M40 69V38L68 14l8 51q0 4-4 4z" fill="#0b4e8c" /><path d="M66 11L40 38V19c6 0 6-8 14-8z" fill="#1464b0" /><path d="M3 68L40 38v31z" fill="#1b8cfa" /></g>) },
  { name: "To Do", art: (
    <g><path d="M2 40l14-14 16 17-9 19z" fill="#1f5fbd" /><path d="M62 10q2-1 4 1l11 11q1 2 0 4L33 69q-2 2-4 0L17 55z" fill="url(#todoV)" /></g>) },
  { name: "Trello", run: true, art: (
    <Tile fill="url(#trelloV)"><rect x="18" y="18" width="44" height="44" rx="6" fill="#f6f8fa" /><rect x="26" y="26" width="11" height="25" rx="1.500" fill="#1a7fc8" /><rect x="43" y="26" width="11" height="15" rx="1.500" fill="#1a7fc8" /></Tile>) },
  { name: "Pencil", art: (
    <g><path d="M29 7l22 42v24L29 36z" fill="#f2a43a" /><rect x="7" y="7" width="22" height="50" fill="#f5b04a" /><rect x="14" y="7" width="7" height="50" fill="#fbc465" /><path d="M7 56q3-4 7 0 4-4 7 0 4-4 8 0L20 73h-4z" fill="#fbe6cf" /><path d="M15 70h7l-3.500 4z" fill="#333" /><rect x="51" y="7" width="22" height="66" fill="#f5b04a" /><rect x="58" y="24" width="8" height="49" fill="#fbc465" /><path d="M51 12q0-5 5-5h12q5 0 5 5v9H51z" fill="#f4a6a2" /><rect x="51" y="21" width="22" height="5" fill="#8a8f94" /></g>) },
  { name: "Joplin", run: true, art: (
    <Tile fill="url(#jopV)"><path d="M39 20h16v7h-4v22c0 18-27 18-27 2 0-9 8-12 14-10v7c-3-1-6 1-5 4 1 5 10 4 10-3V27h-4z" fill="#f3f8ff" /></Tile>) },
  { name: "Simplenote", run: true, art: (
    <g><circle cx="40" cy="40" r="37" fill="#fbfbfc" /><path d="M20 22C9 34 11 50 23 60c11 9 26 9 27-2 1-11-10-14-19-21-7-6-10-9-11-15z" fill="#3461c8" /><path d="M60 58c9-12 9-28-3-39-10-8-24-7-25 3-1 9 8 12 16 17 9 6 12 12 12 19z" fill="#3461c8" /></g>) },
  { name: "Keep", art: (
    <g><path d="M7 10q0-3 3-3h60q3 0 3 3v44L54 73H10q-3 0-3-3z" fill="#f4b42c" /><path d="M73 54L54 73V58q0-4 4-4z" fill="#fbdc8c" /><path d="M34 54c0-7-9-9-9-20a15 15 0 0 1 30 0c0 11-9 13-9 20z" fill="none" stroke="#fff" strokeWidth="4.500" /><path d="M33 61h14" stroke="#fff" strokeWidth="5" /></g>) },
  { name: "Notes", art: (
    <g><Tile fill="url(#calV)" /><g clipPath="url(#tile)"><rect x="7" y="7" width="66" height="17" fill="url(#notesV)" /></g><path d="M8 26.500h64" stroke="#b5ada0" strokeWidth="2" strokeDasharray="2 1" /><path d="M7 40h66M7 56h66" stroke="#cfccc7" strokeWidth="1.500" /></g>) },
  { name: "Reminders", art: (
    <Tile>{[["#1a7bf5", 24], ["#fb4338", 40], ["#f79420", 56]].map(([c, y]) => <g key={y}><circle cx="19" cy={y} r="5" fill="none" stroke={c} strokeWidth="1.300" /><circle cx="19" cy={y} r="3.300" fill={c} /><path d={`M31 ${y}h35`} stroke="#c6c6c8" strokeWidth="1.500" /></g>)}</Tile>) },
  { name: "Stickies", art: (
    <g><rect x="7" y="14" width="66" height="59" rx="13" fill="#d8be58" /><path d="M22 7h36q15 0 15 15v18c0 15-12 27-26 27H22Q7 67 7 52V22Q7 7 22 7z" fill="url(#stickV)" /><path d="M18 29c4-14 8-16 8-8s-2 10 2 5 6-4 8 0 6 2 8 1 10 0 18 0M18 38h44M18 50h24" fill="none" stroke="#d9bd55" strokeWidth="3" /></g>) },
  { name: "Chat", art: (
    <g><path d="M26 8C10 10 1 24 2 40c0 8 3 14 6 18L5 72l18-7z" fill="#12b5cf" stroke="#fff" strokeWidth="3" /><path d="M46 8c18-2 32 12 32 31S62 66 48 66c-4 0-8 0-11-1l-12 8 2-13C14 42 22 12 46 8z" fill="#8bc34a" stroke="#fff" strokeWidth="3.500" /><circle cx="37" cy="38" r="3.300" fill="#fff" /><circle cx="48" cy="38" r="3.300" fill="#fff" /><circle cx="59" cy="38" r="3.300" fill="#fff" /></g>) },
  { name: "Messages", art: (
    <Tile fill="url(#greenV)"><path d="M40 19c14 0 24 8 24 19s-10 19-24 19c-3 0-6-.3-8-1-2 3-6 5-10 5 2-2 3-5 3-8-6-4-9-9-9-15 0-11 10-19 24-19z" fill="url(#grayV)" /></Tile>) },
  { name: "FaceTime", art: (
    <Tile fill="url(#greenV)"><rect x="17" y="26" width="32" height="29" rx="7" fill="#eef4ee" /><path d="M51 37l11-8q2-1 2 1v21q0 2-2 1l-11-8z" fill="#e6efe6" /></Tile>) },
  { name: "App Store", art: (
    <Tile fill="url(#storeV)"><path d="M43 21L27 51M38 21l20 38M17 48h24M50 48h13M24 55l-2 4" stroke="#fff" strokeWidth="5" strokeLinecap="round" /></Tile>) },
  { name: "System Preferences", art: (
    <Tile fill="url(#prefV)"><circle cx="40" cy="40" r="28" fill="#5b5f63" /><circle cx="40" cy="40" r="26.500" fill="none" stroke="#2c2e30" strokeWidth="4" strokeDasharray="2 1.500" /><circle cx="40" cy="40" r="20" fill="#3b3e41" stroke="#b1b5b9" strokeWidth="3" /><path d="M40 40l20-3M40 40L29 23M40 40L30 58" stroke="#a8acb0" strokeWidth="4" /><circle cx="40" cy="40" r="6" fill="#6a6e72" stroke="#b1b5b9" strokeWidth="2" /></Tile>) },
  { name: "ForkLift", run: true, art: (
    <g><path d="M1 38l10-6 32 12v22l-10 2L6 54z" fill="#f2b705" /><path d="M6 36l4-30 6-6 22 2 4 12-4 34-14 4z" fill="#2f3135" /><path d="M14 28l3-18 16-3-3 28z" fill="#5d6167" /><path d="M16 32l10-4 8 6-4 12-12-2z" fill="#1f2022" /><circle cx="10" cy="52" r="7.500" fill="#26272a" /><circle cx="10" cy="52" r="3" fill="#e8b10c" /><circle cx="28" cy="62" r="9" fill="#26272a" /><circle cx="28" cy="62" r="3.500" fill="#e8b10c" /><path d="M43 8v56M56 3v56" stroke="#b9bec3" strokeWidth="4.500" /><path d="M42 18h16M42 36h16M42 52h16" stroke="#6f7479" strokeWidth="4" /><path d="M43 62l18 17M58 54l22 15" stroke="#d3d7da" strokeWidth="4.500" /></g>) },
  { name: "Activity Monitor", art: (
    <Tile fill="#c8d1d2"><rect x="9.500" y="9.500" width="61" height="61" rx="13" fill="#050707" /><rect x="14" y="14" width="52" height="52" rx="7" fill="#173230" /><path d="M14 27h52M14 40h52M14 53h52M27 14v52M40 14v52M53 14v52" stroke="#2c5653" strokeWidth="1" /><path d="M14 43h7l2-6 3 10 2-28 3 35 3-12 4 8 6-12 5 6 4-4 4 3h6" fill="none" stroke="#7fe3d0" strokeWidth="1.700" /></Tile>) },
  { name: "Terminal", art: (
    <Tile fill="#c3c6c9"><rect x="9.500" y="9.500" width="61" height="61" rx="13" fill="#080808" /><rect x="14" y="14" width="52" height="52" rx="8" fill="#262626" /><path d="M19 20l6 4-6 5M29 32h10" fill="none" stroke="#eee" strokeWidth="2.300" /></Tile>) },
  { name: "Termius", run: true, art: (
    <Tile fill="url(#termV)"><path d="M32 25c3-5 11-5 14 0 6-1 10 3 10 8 6 4 6 12 1 15 0 5-4 8-8 7-3 6-12 6-15 0-5 1-10-2-9-8-6-3-6-11-1-14-1-5 3-9 8-8z" fill="none" stroke="#f1f2f8" strokeWidth="3.300" /><path d="M33 35l6 4-6 4M41 44q3 1.500 6 0" fill="none" stroke="#f1f2f8" strokeWidth="2.600" /></Tile>) },
];

const FILES = [
  { name: "X", art: (
    <g><path d="M8 15q0-3 3-3h11l10 18 5-8C37 8 50-1 62 2c14 4 16 22 8 32l-8 6-9-2-5 10 15 14v12H49L38 58l-7 18H9V63h6l9-19L8 26z" fill="#fff" stroke="#111" strokeWidth="3" strokeLinejoin="round" /><path d="M12 20l9-3 37 52h-9z" fill="url(#xV)" stroke="#3c8f35" strokeWidth="4" /><path d="M16 70L52 24" stroke="#3c8f35" strokeWidth="9" /><path d="M10 71h14M46 71h14" stroke="#2e7d32" strokeWidth="6" /><circle cx="56" cy="22" r="14" fill="#6fb83c" /><ellipse cx="59" cy="20" rx="5.500" ry="7" fill="#fff" stroke="#111" strokeWidth="2.200" /></g>) },
  { name: "TextEdit", art: (
    <g><rect x="7" y="7" width="66" height="66" rx="15" fill="#fdfdfd" /><path d="M7 24h66M7 32h66M7 40h66M7 48h66M7 56h66M7 64h66" stroke="#cfcfcf" strokeWidth="1.200" /><path d="M18 8v64" stroke="#efc4c4" /><path d="M64 0l6 3-36 70-3 4 0-6z" fill="#b9cdda" stroke="#66737d" strokeWidth="1.300" /></g>) },
  { name: "LibreOffice", art: (
    <g><path d="M9 0h34l29 31v48H9z" fill="#fbfbfb" stroke="#555" strokeWidth="3" /><path d="M52 0h21v22z" fill="#555" /></g>) },
];

const RIGHT = [
  { name: "Downloads", art: (
    <g><path d="M20 2h28v30H20z" fill="#e8e8ea" stroke="#aaa" /><path d="M40 6h20v26H40z" fill="#f6f6f6" stroke="#bbb" /><path d="M24 8h14M24 13h14M24 18h14" stroke="#aaa" /><rect x="6" y="21" width="68" height="45" fill="#f3f5f8" stroke="#fff" strokeWidth="2" /><rect x="7" y="22" width="66" height="4" fill="#cfd4da" /><rect x="7" y="27" width="66" height="4" fill="#2c3a63" /><rect x="7" y="31" width="13" height="30" fill="#dfe3ea" /><path d="M24 35h20v7H24zM48 35h20v7H48zM24 46h44" fill="#e8e8e8" stroke="#ccc" /><path d="M9 62.500h62" stroke="#556a9a" strokeWidth="3" strokeDasharray="3 1.500" /></g>) },
  { name: "Trash", art: (
    <g><path d="M12 10L26 2l8 6 8-7 12 3 14 6-6 10H18z" fill="#dcdfe2" stroke="#666" /><path d="M20 8l8 8 6-8 8 9 8-10 8 8" fill="none" stroke="#3d4a4f" strokeWidth="2.500" /><path d="M30 10h8l-3 6z" fill="#27a9a0" /><path d="M11 12c16 6 42 6 58 0l-8 60q-1 5-8 5H27q-7 0-8-5z" fill="url(#trashV)" opacity=".94" /><ellipse cx="40" cy="12" rx="29" ry="6" fill="none" stroke="#e9ebec" strokeWidth="2" /></g>) },
];

function DockItem({ app }) {
  return (
    <div className="relative flex w-[87px] shrink-0 justify-center">
      <svg viewBox="0 0 80 80" className="size-20 overflow-visible drop-shadow-[0_2px_2px_rgba(0,0,0,0.3)]">{app.art}</svg>
      {app.run && <span className="absolute -bottom-[11px] size-2 rounded-full bg-[#12020c]" />}
    </div>
  );
}

function Dock() {
  return (
    <div className="absolute left-[68px] top-[1986px] flex h-[104px] w-[3224px] items-center rounded-[34px] border-2 border-white/25 bg-[linear-gradient(100deg,#6e57bd_0px,#7257b6_350px,#8d58a8_650px,#9f578c_850px,#a95870_1000px,#9b595c_1200px,#935a5c_1700px,#8c595c_2100px,#7d585b_2550px,#6b585b_2780px,#55597a_2930px,#50669b_3030px,#556089_3100px,#555768_3220px)] bg-origin-border pb-1 pl-[3.500px] shadow-[0_0_80px_rgba(0,0,0,0.3)]">
      <Gradients />
      {APPS.map((a) => <DockItem key={a.name} app={a} />)}
      <span className="ml-[21px] mr-3.5 h-[76px] w-0.5 bg-[#3a2429]" />
      {FILES.map((a) => <DockItem key={a.name} app={a} />)}
      <span className="ml-[22px] mr-[19px] h-[76px] w-0.5 bg-[#1f3157]" />
      {RIGHT.map((a) => <DockItem key={a.name} app={a} />)}
    </div>
  );
}

export default function App() {
  return (
    <div className="relative flex h-[2100px] w-[3360px] flex-col overflow-hidden bg-[linear-gradient(90deg,#230b7c_0px,#1c0a5c_130px,#2d0b5a_400px,#7a0d62_540px,#8c0c18_700px,#5c0806_830px,#0a0000_900px,#000_2880px,#00244f_2960px,#002a5c_3080px,#000_3200px)] font-[Inter,sans-serif]">
      <MenuBar />
      <div className="-mb-6 h-[26px] shrink-0 bg-[linear-gradient(90deg,#0a4f9c_0px,#0a4f9c_14px,#000_40px,#000_1280px,#0a4fa8_1300px,#22c4c4_1480px,#2ad8c8_1600px,#0a2a28_1690px,#2a7a5a_1780px,#2a5a38_1860px,#060000_1890px,#000_2090px,#c8602c_2110px,#dc7a50_2300px,#caa050_2380px,#2ab8b0_2540px,#1a90a8_2610px,#10041a_2630px,#2a0a40_2900px,#000_2940px)]" />
      <div className="flex h-[1932px] shrink-0 flex-col overflow-hidden rounded-[22px] bg-white">
        <TabStrip />
        <Toolbar />
        <BookmarksBar />
        <AdminPage />
      </div>
      <Dock />
    </div>
  );
}
